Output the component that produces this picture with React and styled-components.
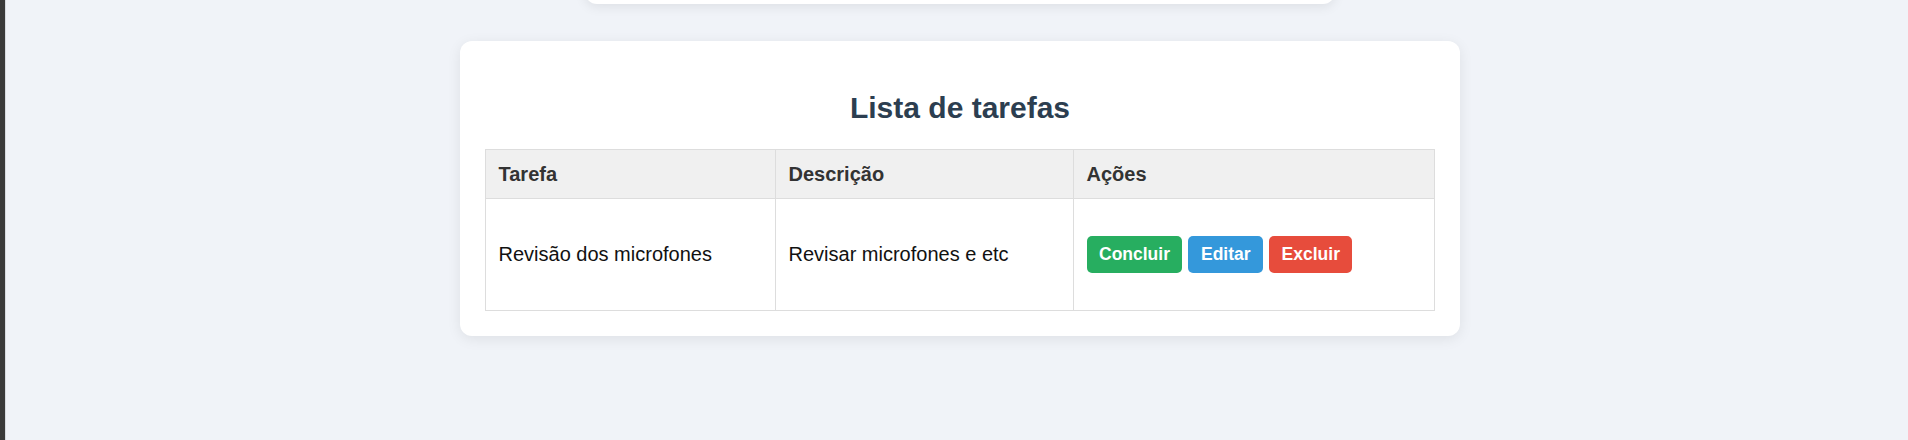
import React from 'react';
import styled, { createGlobalStyle } from 'styled-components';

const GlobalStyle = createGlobalStyle`
  html, body {
    margin: 0;
    padding: 0;
    background-color: #f0f3f8;
    font-family: "Liberation Sans", Arial, sans-serif;
  }
`;

const Page = styled.div`
  display: flex;
  min-height: 440px;
  overflow: hidden;
`;

const SideEdge = styled.div`
  width: 5px;
  flex-shrink: 0;
  background-color: #3a3a3a;
  border-right: 1px solid #d8dbe0;
`;

const Main = styled.main`
  flex: 1;
  display: flex;
  flex-direction: column;
  align-items: center;
  padding-left: 6px;
`;

const TopCard = styled.div`
  width: 750px;
  height: 204px;
  margin-top: -200px;
  background-color: #fff;
  border-radius: 12px;
  box-shadow: 0 3px 12px rgba(0, 0, 0, 0.08);
`;

const Card = styled.section`
  width: 1000px;
  box-sizing: border-box;
  margin-top: 37px;
  padding: 25px;
  background-color: #fff;
  border-radius: 12px;
  box-shadow: 0 3px 14px rgba(0, 0, 0, 0.08);
`;

const Title = styled.h2`
  margin: 25px 0 24px;
  text-align: center;
  font-size: 30px;
  font-weight: bold;
  color: #2c3e50;
`;

const Table = styled.table`
  width: 100%;
  border-collapse: collapse;
  table-layout: fixed;
`;

const Th = styled.th`
  padding: 12.5px;
  text-align: left;
  font-size: 20px;
  font-weight: bold;
  color: #333;
  background-color: #f0f0f0;
  border: 1px solid #ddd;
`;

const Td = styled.td`
  padding: 37px 12.5px;
  font-size: 20px;
  color: #111;
  border: 1px solid #ddd;
  vertical-align: middle;
`;

const Actions = styled.div`
  display: flex;
  gap: 6px;
`;

const Button = styled.button`
  border: none;
  border-radius: 5px;
  padding: 8px 12.5px;
  font-family: "Liberation Sans", Arial, sans-serif;
  font-size: 17.5px;
  font-weight: bold;
  color: #fff;
  background-color: ${(p) => p.$bg};
  cursor: pointer;
`;

const tasks = [
  { id: 1, name: 'Revisão dos microfones', desc: 'Revisar microfones e etc' },
];

export default function App() {
  return (
    <Page>
      <GlobalStyle />
      <SideEdge />
      <Main>
        <TopCard />
        <Card>
          <Title>Lista de tarefas</Title>
          <Table>
            <colgroup>
              <col style={{ width: 290 }} />
              <col style={{ width: 298 }} />
              <col />
            </colgroup>
            <thead>
              <tr>
                <Th>Tarefa</Th>
                <Th>Descrição</Th>
                <Th>Ações</Th>
              </tr>
            </thead>
            <tbody>
              {tasks.map((t) => (
                <tr key={t.id}>
                  <Td>{t.name}</Td>
                  <Td>{t.desc}</Td>
                  <Td>
                    <Actions>
                      <Button $bg="#27ae60">Concluir</Button>
                      <Button $bg="#3498db">Editar</Button>
                      <Button $bg="#e74c3c">Excluir</Button>
                    </Actions>
                  </Td>
                </tr>
              ))}
            </tbody>
          </Table>
        </Card>
      </Main>
    </Page>
  );
}
